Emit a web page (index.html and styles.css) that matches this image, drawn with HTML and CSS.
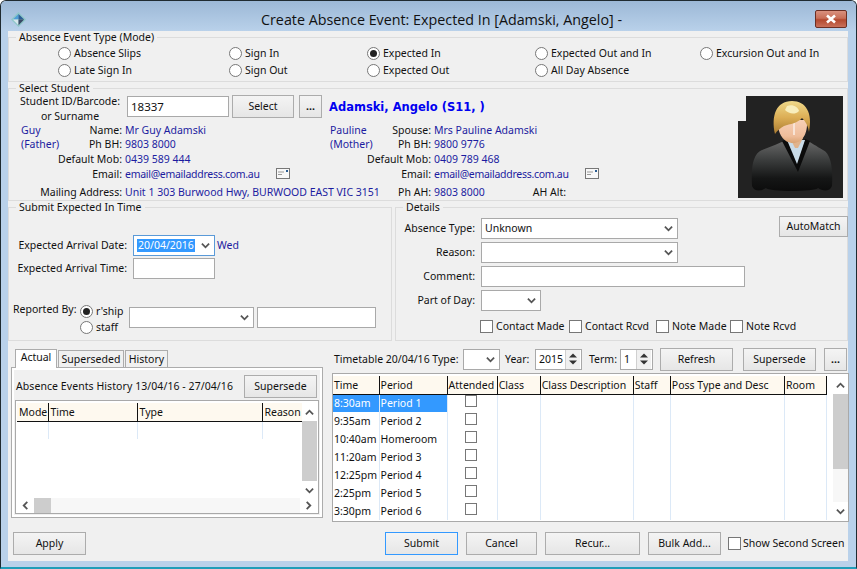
FILE: index.html
```html
<!DOCTYPE html>
<html lang="en">
<head>
  <meta charset="UTF-8" />
  <title>Create Absence Event</title>
  <link rel="stylesheet" href="styles.css">
</head>
<body>
  <!-- shared small glyphs -->
  <svg class="defs" width="0" height="0">
    <symbol id="chev-down" viewBox="0 0 10 7"><path d="M1 1.5 5 5.5 9 1.5" fill="none" stroke="#555" stroke-width="2"/></symbol>
    <symbol id="chev-up" viewBox="0 0 10 7"><path d="M1 5.5 5 1.5 9 5.5" fill="none" stroke="#555" stroke-width="2"/></symbol>
    <symbol id="chev-left" viewBox="0 0 7 10"><path d="M5.5 1 1.5 5 5.5 9" fill="none" stroke="#555" stroke-width="2"/></symbol>
    <symbol id="chev-right" viewBox="0 0 7 10"><path d="M1.5 1 5.5 5 1.5 9" fill="none" stroke="#555" stroke-width="2"/></symbol>
    <symbol id="mail" viewBox="0 0 14 11"><rect x=".5" y=".5" width="13" height="10" fill="#f8f8f8" stroke="#777"/><path d="M2 4h6M2 6.5h4" stroke="#999"/><rect x="10" y="2" width="2" height="2" fill="#2a5c90"/></symbol>
  </svg>

  <div class="window">
    <div class="titlebar">
      <svg class="app-icon" viewBox="0 0 16 16">
        <path d="M8 0 16 8 8 16 0 8Z" fill="#8fc7c9"/>
        <path d="M8 2 8 8 2 8Z" fill="#4f9fd8"/>
        <path d="M8 2 14 8 8 8Z" fill="#2c5f96"/>
        <path d="M2 8 8 8 8 14Z" fill="#d6e6ec"/>
        <path d="M14 8 8 8 8 14Z" fill="#3a4a66"/>
      </svg>
      <div class="title">Create Absence Event: Expected In [Adamski, Angelo] -</div>
      <div class="close"><svg viewBox="0 0 12 10" width="12" height="10"><path d="M2 1.5 10 8.5M10 1.5 2 8.5" stroke="#fff" stroke-width="2.6"/></svg></div>
    </div>

    <div class="client">
      <fieldset class="group group-mode">
        <legend>Absence Event Type (Mode)</legend>
        <div class="mode-grid">
          <label class="opt"><span class="radio"></span>Absence Slips</label>
          <label class="opt"><span class="radio"></span>Sign In</label>
          <label class="opt"><span class="radio on"></span>Expected In</label>
          <label class="opt"><span class="radio"></span>Expected Out and In</label>
          <label class="opt"><span class="radio"></span>Excursion Out and In</label>
          <label class="opt"><span class="radio"></span>Late Sign In</label>
          <label class="opt"><span class="radio"></span>Sign Out</label>
          <label class="opt"><span class="radio"></span>Expected Out</label>
          <label class="opt"><span class="radio"></span>All Day Absence</label>
        </div>
      </fieldset>

      <fieldset class="group group-student">
        <legend>Select Student</legend>
        <div class="student">
          <div class="student-main">
            <div class="search-row">
              <div class="search-label">Student ID/Barcode:<br>or Surname</div>
              <div class="field search-input">18337</div>
              <button class="btn select-btn">Select</button>
              <button class="btn dots-btn">...</button>
              <div class="student-name">Adamski, Angelo (S11, )</div>
            </div>
            <div class="contacts">
              <div class="contact">
                <div class="rel">Guy</div><div class="lbl">Name:</div><div class="val">Mr Guy Adamski</div>
                <div class="rel">(Father)</div><div class="lbl">Ph BH:</div><div class="val">9803 8000</div>
                <div class="lbl wide">Default Mob:</div><div class="val">0439 589 444</div>
                <div class="lbl wide">Email:</div><div class="val"><span class="email">email@emailaddress.com.au</span><svg class="mail"><use href="#mail"/></svg></div>
                <div class="lbl wide last">Mailing Address:</div><div class="val last">Unit 1 303 Burwood Hwy, BURWOOD EAST VIC 3151</div>
              </div>
              <div class="contact">
                <div class="rel">Pauline</div><div class="lbl">Spouse:</div><div class="val">Mrs Pauline Adamski</div>
                <div class="rel">(Mother)</div><div class="lbl">Ph BH:</div><div class="val">9800 9776</div>
                <div class="lbl wide">Default Mob:</div><div class="val">0409 789 468</div>
                <div class="lbl wide">Email:</div><div class="val"><span class="email">email@emailaddress.com.au</span><svg class="mail"><use href="#mail"/></svg></div>
                <div class="lbl wide last">Ph AH:</div><div class="val last">9803 8000<span class="ah-alt">AH Alt:</span></div>
              </div>
            </div>
          </div>
          <svg class="avatar" viewBox="0 0 105 102">
            <defs>
              <linearGradient id="hair" x1="0" y1="0" x2="0" y2="1"><stop offset="0" stop-color="#efd98a"/><stop offset=".5" stop-color="#dcae55"/><stop offset="1" stop-color="#a97a30"/></linearGradient>
              <linearGradient id="sweater" x1="0" y1="0" x2="0" y2="1"><stop offset="0" stop-color="#6a6a6a"/><stop offset=".4" stop-color="#3a3c3c"/><stop offset=".75" stop-color="#151616"/><stop offset="1" stop-color="#0c0c0c"/></linearGradient>
              <linearGradient id="skin" x1="0" y1="0" x2="0" y2="1"><stop offset="0" stop-color="#f6d0b6"/><stop offset=".7" stop-color="#efbd9b"/><stop offset="1" stop-color="#d9a272"/></linearGradient>
            </defs>
            <path d="M8 0H105V102H0V25H8Z" fill="#222"/>
            <path d="M14 90C13 70 15 58 24 54 34 50 42 47 48 44L68 44C74 47 78 50 85 54 93 58 95 72 94 90 92 96 84 95 80 92 78 96 30 96 28 92 24 95 16 96 14 90Z" fill="url(#sweater)"/>
            <path d="M44 45 50 43 59 66 67 43 72 45 60 76Z" fill="#0b0b0b"/>
            <path d="M49 44 67 44 59 68Z" fill="#c9dbe8"/>
            <path d="M52 42H65L60 52H57Z" fill="#e0b38c"/>
            <path d="M40 24H69C70 38 64 47 55 47 46 47 39 38 40 24Z" fill="url(#skin)"/>
            <path d="M55 24h2v15h-2z" fill="#f8e4d6"/>
            <path d="M37 38C33 20 38 5 54 5 68 5 75 17 71 36 70 30 68 26 64 22 60 27 52 28 46 30 42 32 39 35 37 38Z" fill="url(#hair)"/>
            <path d="M49 10C55 8 60 11 61 15 57 19 51 18 47 14Z" fill="#f8eebc"/>
          </svg>
        </div>
      </fieldset>

      <div class="mid-row">
        <fieldset class="group group-submit">
          <legend>Submit Expected In Time</legend>
          <div class="time-grid">
            <div class="lbl-plain">Expected Arrival Date:</div>
            <div class="combo date-combo"><span class="sel-text">20/04/2016</span><svg class="chev"><use href="#chev-down"/></svg></div>
            <div class="val">Wed</div>
            <div class="lbl-plain">Expected Arrival Time:</div>
            <div class="field time-field"></div>
          </div>
          <div class="report-row">
            <div class="report-label">Reported By:</div>
            <div class="report-opts">
              <label class="opt"><span class="radio on"></span>r'ship</label>
              <label class="opt"><span class="radio"></span>staff</label>
            </div>
            <div class="combo report-combo"><svg class="chev"><use href="#chev-down"/></svg></div>
            <div class="field report-field"></div>
          </div>
        </fieldset>

        <fieldset class="group group-details">
          <legend>Details</legend>
          <div class="details-top">
            <div class="details-grid">
              <div class="lbl-plain">Absence Type:</div>
              <div class="combo w197"><span>Unknown</span><svg class="chev"><use href="#chev-down"/></svg></div>
              <div class="lbl-plain">Reason:</div>
              <div class="combo w197"><svg class="chev"><use href="#chev-down"/></svg></div>
              <div class="lbl-plain">Comment:</div>
              <div class="field w264"></div>
              <div class="lbl-plain">Part of Day:</div>
              <div class="combo w60"><svg class="chev"><use href="#chev-down"/></svg></div>
            </div>
            <button class="btn automatch">AutoMatch</button>
          </div>
          <div class="checks">
            <label class="opt"><span class="check"></span>Contact Made</label>
            <label class="opt"><span class="check"></span>Contact Rcvd</label>
            <label class="opt"><span class="check"></span>Note Made</label>
            <label class="opt"><span class="check"></span>Note Rcvd</label>
          </div>
        </fieldset>
      </div>

      <div class="lower">
        <div class="history-pane">
          <div class="tabs">
            <div class="tab active">Actual</div>
            <div class="tab w-super">Superseded</div>
            <div class="tab w-hist">History</div>
          </div>
          <div class="tab-panel">
            <div class="history-head">
              <span>Absence Events History 13/04/16 - 27/04/16</span>
              <button class="btn supersede-small">Supersede</button>
            </div>
            <div class="list list-history">
              <div class="list-top">
                <div class="list-body">
                  <table class="grid history-table">
                    <colgroup><col class="h1"><col class="h2"><col class="h3"><col class="h4"></colgroup>
                    <tr><th>Mode</th><th>Time</th><th>Type</th><th>Reason</th></tr>
                    <tr><td></td><td></td><td></td><td></td></tr>
                  </table>
                </div>
                <div class="vscroll">
                  <div class="sb-btn"><svg class="arrow"><use href="#chev-up"/></svg></div>
                  <div class="sb-thumb thumb-history"></div>
                  <div class="sb-track"></div>
                  <div class="sb-btn"><svg class="arrow"><use href="#chev-down"/></svg></div>
                </div>
              </div>
              <div class="hscroll">
                <div class="sb-hbtn"><svg class="arrow-h"><use href="#chev-left"/></svg></div>
                <div class="sb-hthumb"></div>
                <div class="sb-track"></div>
                <div class="sb-hbtn"><svg class="arrow-h"><use href="#chev-right"/></svg></div>
              </div>
            </div>
          </div>
        </div>

        <div class="timetable-pane">
          <div class="toolbar">
            <span class="tb-title">Timetable 20/04/16 Type:</span>
            <div class="combo w37"><svg class="chev"><use href="#chev-down"/></svg></div>
            <span class="tb-year">Year:</span>
            <div class="spin w47"><span>2015</span><div class="spin-btns"><svg viewBox="0 0 8 5"><path d="M4 .5 8 4.5H0Z" fill="#333"/></svg><svg viewBox="0 0 8 5"><path d="M4 4.5 8 .5H0Z" fill="#333"/></svg></div></div>
            <span class="tb-term">Term:</span>
            <div class="spin w33"><span>1</span><div class="spin-btns"><svg viewBox="0 0 8 5"><path d="M4 .5 8 4.5H0Z" fill="#333"/></svg><svg viewBox="0 0 8 5"><path d="M4 4.5 8 .5H0Z" fill="#333"/></svg></div></div>
            <button class="btn tb-refresh">Refresh</button>
            <button class="btn tb-supersede">Supersede</button>
            <button class="btn tb-dots">...</button>
          </div>
          <div class="list list-timetable">
            <div class="list-top">
              <div class="list-body">
                <table class="grid timetable">
                  <colgroup><col class="t1"><col class="t2"><col class="t3"><col class="t4"><col class="t5"><col class="t6"><col class="t7"><col class="t8"></colgroup>
                  <tr><th>Time</th><th>Period</th><th>Attended</th><th>Class</th><th>Class Description</th><th>Staff</th><th>Poss Type and Desc</th><th>Room</th></tr>
                  <tr><td class="picked">8:30am</td><td class="picked">Period 1</td><td class="mid"><span class="check"></span></td><td></td><td></td><td></td><td></td><td></td></tr>
                  <tr><td>9:35am</td><td>Period 2</td><td class="mid"><span class="check"></span></td><td></td><td></td><td></td><td></td><td></td></tr>
                  <tr><td>10:40am</td><td>Homeroom</td><td class="mid"><span class="check"></span></td><td></td><td></td><td></td><td></td><td></td></tr>
                  <tr><td>11:20am</td><td>Period 3</td><td class="mid"><span class="check"></span></td><td></td><td></td><td></td><td></td><td></td></tr>
                  <tr><td>12:25pm</td><td>Period 4</td><td class="mid"><span class="check"></span></td><td></td><td></td><td></td><td></td><td></td></tr>
                  <tr><td>2:25pm</td><td>Period 5</td><td class="mid"><span class="check"></span></td><td></td><td></td><td></td><td></td><td></td></tr>
                  <tr><td>3:30pm</td><td>Period 6</td><td class="mid"><span class="check"></span></td><td></td><td></td><td></td><td></td><td></td></tr>
                </table>
              </div>
              <div class="vscroll">
                <div class="sb-btn"><svg class="arrow"><use href="#chev-up"/></svg></div>
                <div class="sb-thumb thumb-timetable"></div>
                <div class="sb-track"></div>
                <div class="sb-btn"><svg class="arrow"><use href="#chev-down"/></svg></div>
              </div>
            </div>
          </div>
        </div>
      </div>

      <div class="footer">
        <button class="btn apply">Apply</button>
        <button class="btn primary submit">Submit</button>
        <button class="btn cancel">Cancel</button>
        <button class="btn recur">Recur...</button>
        <button class="btn bulk">Bulk Add...</button>
        <label class="opt second"><span class="check"></span>Show Second Screen</label>
      </div>
    </div>
  </div>
</body>
</html>
```

FILE: styles.css
```css
* {
  box-sizing: border-box;
}

body {
  margin: 0;
  background: #fff;
  font-family: "Noto Sans", "Open Sans", sans-serif;
  font-size: 10.5px;
  line-height: 13px;
  color: #111;
}

.defs {
  display: block;
  height: 0;
}

.window {
  width: 857px;
  height: 569px;
  display: flex;
  flex-direction: column;
  overflow: hidden;
  background: #b9d1ea;
  border: 1px solid #1f2a30;
  border-bottom: 2px solid #1f9db8;
  border-radius: 6px 6px 0 0;
}

.titlebar {
  height: 30px;
  flex: none;
  display: flex;
  align-items: center;
  position: relative;
  background: linear-gradient(#9cb8d6, #b9d1ea);
}

.app-icon {
  width: 15px;
  height: 15px;
  margin: 7px 0 0 10px;
}

.title {
  position: absolute;
  left: 260px;
  top: 9px;
  font-family: "Open Sans", sans-serif;
  font-size: 14.3px;
  line-height: 20px;
  color: #111;
  white-space: nowrap;
}

.close {
  position: absolute;
  left: 814px;
  top: 9px;
  width: 32px;
  height: 18px;
  display: flex;
  align-items: center;
  justify-content: center;
  background: linear-gradient(#d9917f 0, #c86f58 45%, #b3492f 55%, #c9705a 100%);
  border: 1px solid #6b2f24;
  border-radius: 2px;
}

.client {
  flex: 1;
  margin: 0 8px 6px 7px;
  background: #f0f0f0;
  display: flex;
  flex-direction: column;
}

.group {
  margin: 0;
  padding: 0;
  min-width: 0;
  border: 1px solid #dcdcdc;
}

.group legend {
  margin-left: 7px;
  padding: 0 3px;
  line-height: 13px;
}

.group-mode {
  height: 51px;
}

.mode-grid {
  display: grid;
  grid-template-columns: 171px 138px 168px 165px 1fr;
  grid-auto-rows: 17px;
  padding: 1px 0 0 49px;
}

.opt {
  display: flex;
  align-items: center;
  white-space: nowrap;
}

.radio {
  width: 13px;
  height: 13px;
  margin-right: 3px;
  flex: none;
  border: 1px solid #777;
  border-radius: 50%;
  background: #fff;
  display: flex;
  align-items: center;
  justify-content: center;
}

.radio.on::after {
  content: "";
  width: 7px;
  height: 7px;
  border-radius: 50%;
  background: #222;
}

.check {
  width: 13px;
  height: 13px;
  margin-right: 3px;
  flex: none;
  display: inline-block;
  border: 1px solid #777;
  background: #fff;
}

.group-student {
  height: 119px;
}

.student {
  display: flex;
  justify-content: space-between;
  padding: 1px 4px 0 0;
}

.student-main {
  width: 720px;
}

.search-row {
  display: flex;
  align-items: center;
  height: 21px;
}

.search-label {
  width: 118px;
  padding: 4px 0 0 4px;
  text-align: center;
  line-height: 14.4px;
  flex: none;
}

.field,
.combo,
.spin {
  height: 21px;
  background: #fff;
  border: 1px solid #a9a9a9;
  display: flex;
  align-items: center;
  padding: 0 2px 0 3px;
  flex: none;
}

.search-input {
  width: 102px;
  font-size: 11.5px;
}

.btn {
  height: 23px;
  padding: 0;
  font: inherit;
  color: #111;
  background: linear-gradient(#f4f4f4, #e6e6e6);
  border: 1px solid #acacac;
  flex: none;
}

.select-btn {
  width: 62px;
  margin-left: 3px;
}

.dots-btn {
  width: 23px;
  margin-left: 5px;
  font-weight: bold;
}

.student-name {
  margin: 1px 0 0 7px;
  font-family: "DejaVu Sans", sans-serif;
  font-weight: bold;
  font-size: 11.5px;
  color: #0000f0;
  white-space: nowrap;
}

.contacts {
  display: grid;
  grid-template-columns: 309px 1fr;
  padding: 6px 0 0 12px;
}

.contact {
  display: grid;
  grid-template-columns: 47px 54px 1fr;
  grid-auto-rows: 14.67px;
  align-items: center;
  white-space: nowrap;
}

.rel {
  color: #1c1ca0;
}

.lbl {
  text-align: right;
}

.lbl.wide {
  grid-column: 1 / span 2;
}

.last {
  margin-top: 7px;
}

.val {
  padding-left: 3px;
  color: #1c1ca0;
  white-space: nowrap;
}

.email {
  letter-spacing: -0.28px;
}

.mail {
  width: 14px;
  height: 11px;
  margin-left: 16px;
  vertical-align: -1px;
}

.ah-alt {
  margin-left: 48px;
  color: #111;
}

.avatar {
  width: 105px;
  height: 102px;
  flex: none;
}

.mid-row {
  display: flex;
  gap: 3px;
}

.group-submit {
  width: 384px;
  height: 140px;
}

.group-details {
  flex: 1;
  height: 140px;
}

.time-grid {
  display: grid;
  grid-template-columns: 118px 82px auto;
  grid-auto-rows: 21px;
  column-gap: 6px;
  row-gap: 2px;
  align-items: center;
  padding-top: 21px;
}

.time-grid .val {
  padding-left: 0;
  margin-left: -4px;
}

.lbl-plain {
  text-align: right;
  white-space: nowrap;
}

.date-combo {
  justify-content: space-between;
  border-color: #5a9ad8;
}

.sel-text {
  background: #3399ff;
  color: #fff;
  padding: 0 1px;
}

.chev {
  width: 9px;
  height: 7px;
  margin-right: 2px;
  flex: none;
}

.combo {
  justify-content: flex-end;
}

.combo span {
  margin-right: auto;
}

.report-row {
  display: flex;
  padding: 28px 0 0 4px;
}

.report-label {
  width: 67px;
  flex: none;
  margin-top: -4px;
}

.report-opts {
  width: 49px;
  flex: none;
  display: grid;
  grid-auto-rows: 16px;
  margin-top: -4px;
}

.report-combo {
  width: 125px;
}

.report-field {
  width: 119px;
  margin-left: 3px;
}

.details-top {
  display: flex;
  justify-content: space-between;
}

.details-grid {
  display: grid;
  grid-template-columns: 79px auto;
  grid-auto-rows: 21px;
  column-gap: 6px;
  row-gap: 3px;
  align-items: center;
  justify-items: start;
  margin-top: 4px;
}

.details-grid .lbl-plain {
  justify-self: end;
}

.w197 {
  width: 197px;
}

.w264 {
  width: 264px;
}

.w60 {
  width: 60px;
}

.w37 {
  width: 37px;
}

.w47 {
  width: 47px;
}

.w33 {
  width: 33px;
}

.automatch {
  width: 69px;
  height: 21px;
  margin: 2px -1px 0 0;
}

.checks {
  display: grid;
  grid-template-columns: 89px 87px 74px auto;
  margin: 9px 0 0 84px;
}

.lower {
  display: flex;
  margin-top: 6px;
  height: 178px;
}

.history-pane {
  width: 312px;
  margin-left: 3px;
  padding-top: 2px;
  flex: none;
}

.tabs {
  display: flex;
  padding-left: 4px;
  gap: 1px;
  height: 18px;
  align-items: flex-end;
  position: relative;
  z-index: 1;
}

.tab {
  height: 17px;
  padding-top: 2px;
  text-align: center;
  background: #f0f0f0;
  border: 1px solid #acacac;
  border-bottom: none;
}

.tab.active {
  width: 42px;
  height: 19px;
  margin-bottom: -1px;
  padding-top: 1px;
  background: #fff;
}

.w-super {
  width: 66px;
}

.w-hist {
  width: 43px;
}

.tab-panel {
  height: 151px;
  border: 1px solid #acacac;
  padding: 7px 3px 0;
  background: #f0f0f0;
  box-shadow: inset 0 0 0 2px #fff;
}

.history-head {
  display: flex;
  justify-content: space-between;
  align-items: center;
  padding: 0 2px 0 1px;
  margin-bottom: 2px;
}

.history-head span {
  letter-spacing: 0.07px;
}

.supersede-small {
  width: 73px;
}

.list {
  background: #fff;
  border: 1px solid #a9a9a9;
  padding: 1px;
}

.list-history {
  height: 114px;
  padding-top: 2px;
}

.list-top {
  display: flex;
  justify-content: space-between;
}

.list-body {
  overflow: hidden;
}

.grid {
  table-layout: fixed;
  border-collapse: collapse;
}

.grid th {
  height: 18px;
  padding: 1px 0 0 2px;
  font-weight: normal;
  text-align: left;
  white-space: nowrap;
  overflow: hidden;
  background: #fef9ef;
  border-right: 1px solid #111;
  border-bottom: 1px solid #111;
}

.grid td {
  height: 18px;
  padding: 0 0 0 2px;
  white-space: nowrap;
  overflow: hidden;
  border-right: 1px solid #dce9f7;
}

.grid td.picked {
  background: #3399ff;
  color: #fff;
}

.grid td.mid {
  text-align: center;
  padding: 0;
}

.grid .check {
  width: 12px;
  height: 12px;
  margin: 0 2px 0 0;
  vertical-align: 1px;
}

.history-table {
  width: 286px;
}

.h1 { width: 31px; }
.h2 { width: 89px; }
.h3 { width: 125px; }
.h4 { width: 41px; }

.timetable {
  width: 494px;
}

.t1 { width: 46px; }
.t2 { width: 68px; }
.t3 { width: 50px; }
.t4 { width: 43px; }
.t5 { width: 93px; }
.t6 { width: 37px; }
.t7 { width: 114px; }
.t8 { width: 42px; }

.vscroll {
  width: 15px;
  flex: none;
  display: flex;
  flex-direction: column;
}

.list-history .vscroll {
  height: 94px;
}

.list-timetable .vscroll {
  height: 144px;
}

.sb-btn {
  height: 18px;
  display: flex;
  align-items: center;
  justify-content: center;
  flex: none;
}

.arrow {
  width: 9px;
  height: 7px;
}

.sb-thumb {
  background: #cdcdcd;
  flex: none;
}

.thumb-history {
  height: 60px;
}

.thumb-timetable {
  height: 75px;
}

.sb-track {
  flex: 1;
  background: #f7f7f7;
}

.hscroll {
  display: flex;
  height: 15px;
  margin-top: 1px;
}

.sb-hbtn {
  width: 17px;
  display: flex;
  align-items: center;
  justify-content: center;
  flex: none;
}

.arrow-h {
  width: 7px;
  height: 9px;
}

.sb-hthumb {
  width: 17px;
  background: #cdcdcd;
  flex: none;
}

.timetable-pane {
  width: 517px;
  margin-left: 9px;
  flex: none;
}

.toolbar {
  display: flex;
  align-items: center;
  height: 24px;
  margin-bottom: 2px;
  padding-left: 2px;
  white-space: nowrap;
}

.tb-title {
  width: 129px;
  flex: none;
}

.tb-year {
  margin-left: 5px;
  width: 30px;
  flex: none;
}

.tb-term {
  margin-left: 7px;
  width: 31px;
  flex: none;
}

.spin {
  justify-content: space-between;
  padding: 0 1px 0 3px;
}

.spin-btns {
  width: 15px;
  height: 19px;
  display: flex;
  flex-direction: column;
  justify-content: space-around;
  align-items: center;
  background: #f0f0f0;
  border-left: 1px solid #d0d0d0;
  padding: 2px 0;
}

.spin-btns svg {
  width: 8px;
  height: 5px;
}

.tb-refresh {
  width: 73px;
  margin-left: 7px;
}

.tb-supersede {
  width: 73px;
  margin-left: 10px;
}

.tb-dots {
  width: 23px;
  margin-left: 8px;
  font-weight: bold;
}

.list-timetable {
  height: 149px;
  padding: 2px 0 1px 0;
}

.list-timetable .grid th,
.list-timetable .grid td {
  padding-left: 1px;
}

.list-timetable .grid td.mid {
  padding-left: 0;
}

.list-timetable .list-top {
  height: 144px;
}

.footer {
  display: flex;
  align-items: center;
  height: 23px;
  margin-top: 7px;
  padding-left: 5px;
}

.apply {
  width: 73px;
}

.submit {
  width: 73px;
  margin-left: 299px;
}

.primary {
  border-color: #3399ff;
}

.cancel {
  width: 71px;
  margin-left: 8px;
}

.recur {
  width: 95px;
  margin-left: 8px;
}

.bulk {
  width: 73px;
  margin-left: 8px;
}

.second {
  margin-left: 7px;
}

.second .check {
  margin-right: 2px;
}
```
